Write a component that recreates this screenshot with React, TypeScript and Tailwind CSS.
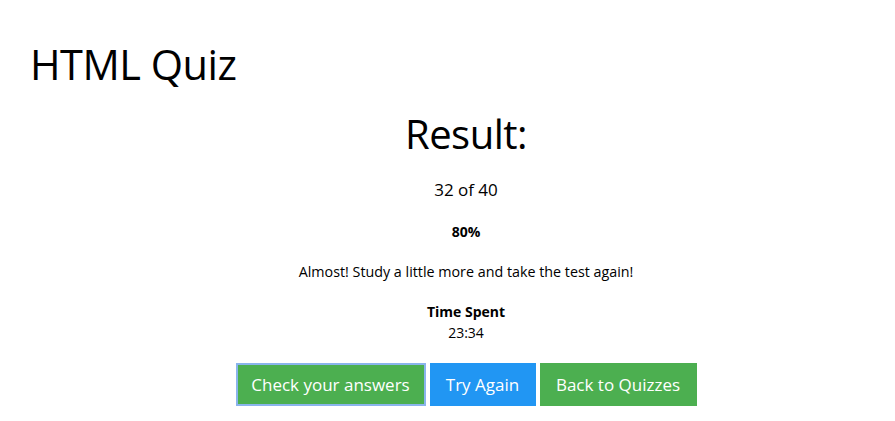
import React from 'react';

const App: React.FC = () => {
  return (
    <div className="min-h-screen bg-white text-black font-['Open_Sans','Liberation_Sans',sans-serif]">
      <h1 className="pl-[30px] pt-[36px] text-[41.5px] leading-[56px] tracking-[-0.5px]">HTML Quiz</h1>

      <div className="ml-[37px] flex flex-col items-center text-center">
        <h2 className="mt-[12px] text-[40px] leading-[60px] tracking-[-0.5px]">Result:</h2>
        <p className="mt-[14px] text-[17px] leading-[24px]">32 of 40</p>
        <p className="mt-[19px] text-[14px] leading-[22px] font-bold">80%</p>
        <p className="mt-[18px] text-[14.3px] leading-[22px]">Almost! Study a little more and take the test again!</p>
        <p className="mt-[19px] text-[14px] leading-[20px] font-bold">Time Spent</p>
        <p className="mt-[1px] text-[14px] leading-[20px]">23:34</p>

        <div className="mt-[20px] flex gap-[4px]">
          <button className="h-[43px] w-[190px] bg-[#4CAF50] text-white text-[17px] border-2 border-[#8ab4ec]">
            Check your answers
          </button>
          <button className="h-[43px] w-[106px] bg-[#2196F3] text-white text-[17px]">Try Again</button>
          <button className="h-[43px] w-[157px] bg-[#4CAF50] text-white text-[17px]">Back to Quizzes</button>
        </div>
      </div>
    </div>
  );
};

export default App;
